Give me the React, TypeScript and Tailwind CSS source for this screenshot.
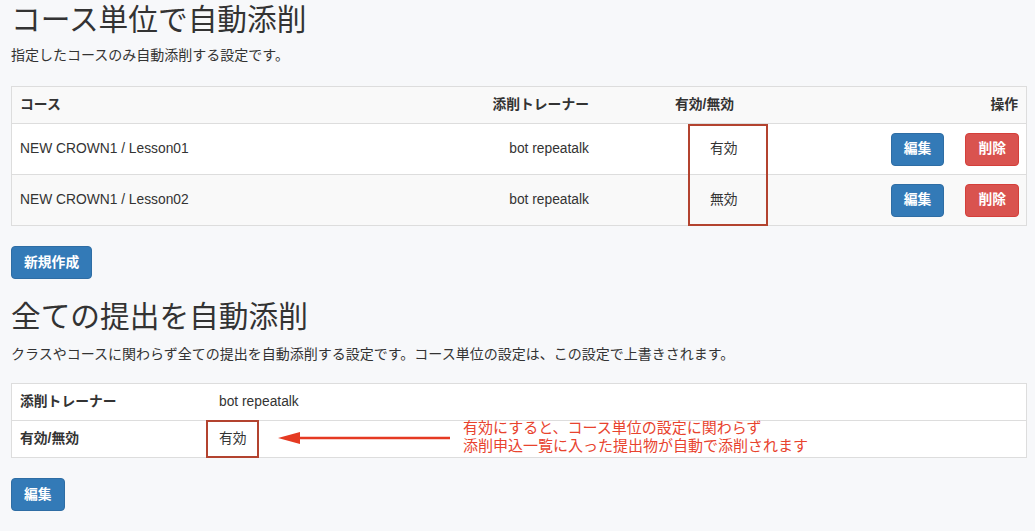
const font = "font-['Liberation_Sans','Noto_Sans_CJK_JP',sans-serif]";

const courses = [
  { name: 'NEW CROWN1 / Lesson01', trainer: 'bot repeatalk', status: '有効', bg: 'bg-white' },
  { name: 'NEW CROWN1 / Lesson02', trainer: 'bot repeatalk', status: '無効', bg: 'bg-[#f9f9f9]' },
];

function Btn({ label, color }: { label: string; color: 'blue' | 'red' }) {
  const c =
    color === 'blue'
      ? 'bg-[#337ab7] border-[#2e6da4]'
      : 'bg-[#d9534f] border-[#d43f3a]';
  return (
    <button
      className={`${c} h-[33px] px-[12px] rounded-[4px] border text-white text-[13.8px] font-bold leading-[20px]`}
    >
      {label}
    </button>
  );
}

function CourseTable() {
  return (
    <div className="relative mt-[21px]">
      <div className="border border-[#ddd] bg-white text-[13.8px] text-[#333]">
        <div className="grid grid-cols-[470px_115px_260px_1fr] h-[37px] items-center bg-[#f9f9f9] border-b border-[#ddd] font-bold">
          <div className="pl-2">コース</div>
          <div className="pr-2 text-right">添削トレーナー</div>
          <div className="pl-[78px]">有効/無効</div>
          <div className="pr-2 text-right">操作</div>
        </div>
        {courses.map((c, i) => (
          <div
            key={i}
            className={`grid grid-cols-[470px_115px_260px_1fr] items-center ${c.bg} ${
              i === 0 ? 'h-[51px] border-b border-[#ddd]' : 'h-[50px]'
            }`}
          >
            <div className="pl-2">{c.name}</div>
            <div className="pr-2 text-right">{c.trainer}</div>
            <div className="pl-[113px]">{c.status}</div>
            <div className="pr-[7px] flex justify-end gap-[21px]">
              <Btn label="編集" color="blue" />
              <Btn label="削除" color="red" />
            </div>
          </div>
        ))}
      </div>
      {/* annotation box */}
      <div className="absolute left-[677px] top-[38px] w-[80px] h-[102px] border-2 border-[#b3432f]" />
    </div>
  );
}

function GlobalTable() {
  return (
    <div className="relative mt-[19px]">
      <div className="border border-[#ddd] bg-white text-[13.8px] text-[#333]">
        <div className="grid grid-cols-[199px_1fr] h-[37px] items-center border-b border-[#ddd]">
          <div className="pl-2 font-bold">添削トレーナー</div>
          <div className="pl-2">bot repeatalk</div>
        </div>
        <div className="grid grid-cols-[199px_1fr] h-[36px] items-center">
          <div className="pl-2 font-bold">有効/無効</div>
          <div className="pl-2">有効</div>
        </div>
      </div>
      <div className="absolute left-[195px] top-[37px] w-[53px] h-[38px] border-2 border-[#b3432f]" />
      <svg
        className="absolute left-[267px] top-[48px]"
        width="174"
        height="14"
        viewBox="0 0 174 14"
      >
        <line x1="20" y1="7" x2="172" y2="7" stroke="#e53a22" strokeWidth="2.5" />
        <polygon points="0,7 22,1 22,13" fill="#e53a22" />
      </svg>
      <div className="absolute left-[452px] top-[36px] text-[15px] leading-[18px] text-[#e8432e]">
        <div>有効にすると、コース単位の設定に関わらず</div>
        <div>添削申込一覧に入った提出物が自動で添削されます</div>
      </div>
    </div>
  );
}

export default function App() {
  return (
    <div className={`${font} min-h-screen bg-[#f7f8fa] pl-[11px] pr-[8px] pt-[2px]`}>
      <h1 className="text-[29.7px] leading-[36px] text-[#333] font-normal">コース単位で自動添削</h1>
      <p className="mt-[7px] text-[14px] leading-[20px] text-[#333]">
        指定したコースのみ自動添削する設定です。
      </p>
      <CourseTable />
      <div className="mt-[20px]">
        <Btn label="新規作成" color="blue" />
      </div>
      <h2 className="mt-[20px] text-[29.7px] leading-[36px] text-[#333] font-normal">全ての提出を自動添削</h2>
      <p className="mt-[9px] text-[14px] leading-[20px] text-[#333]">
        クラスやコースに関わらず全ての提出を自動添削する設定です。コース単位の設定は、この設定で上書きされます。
      </p>
      <GlobalTable />
      <div className="mt-[20px]">
        <Btn label="編集" color="blue" />
      </div>
    </div>
  );
}
